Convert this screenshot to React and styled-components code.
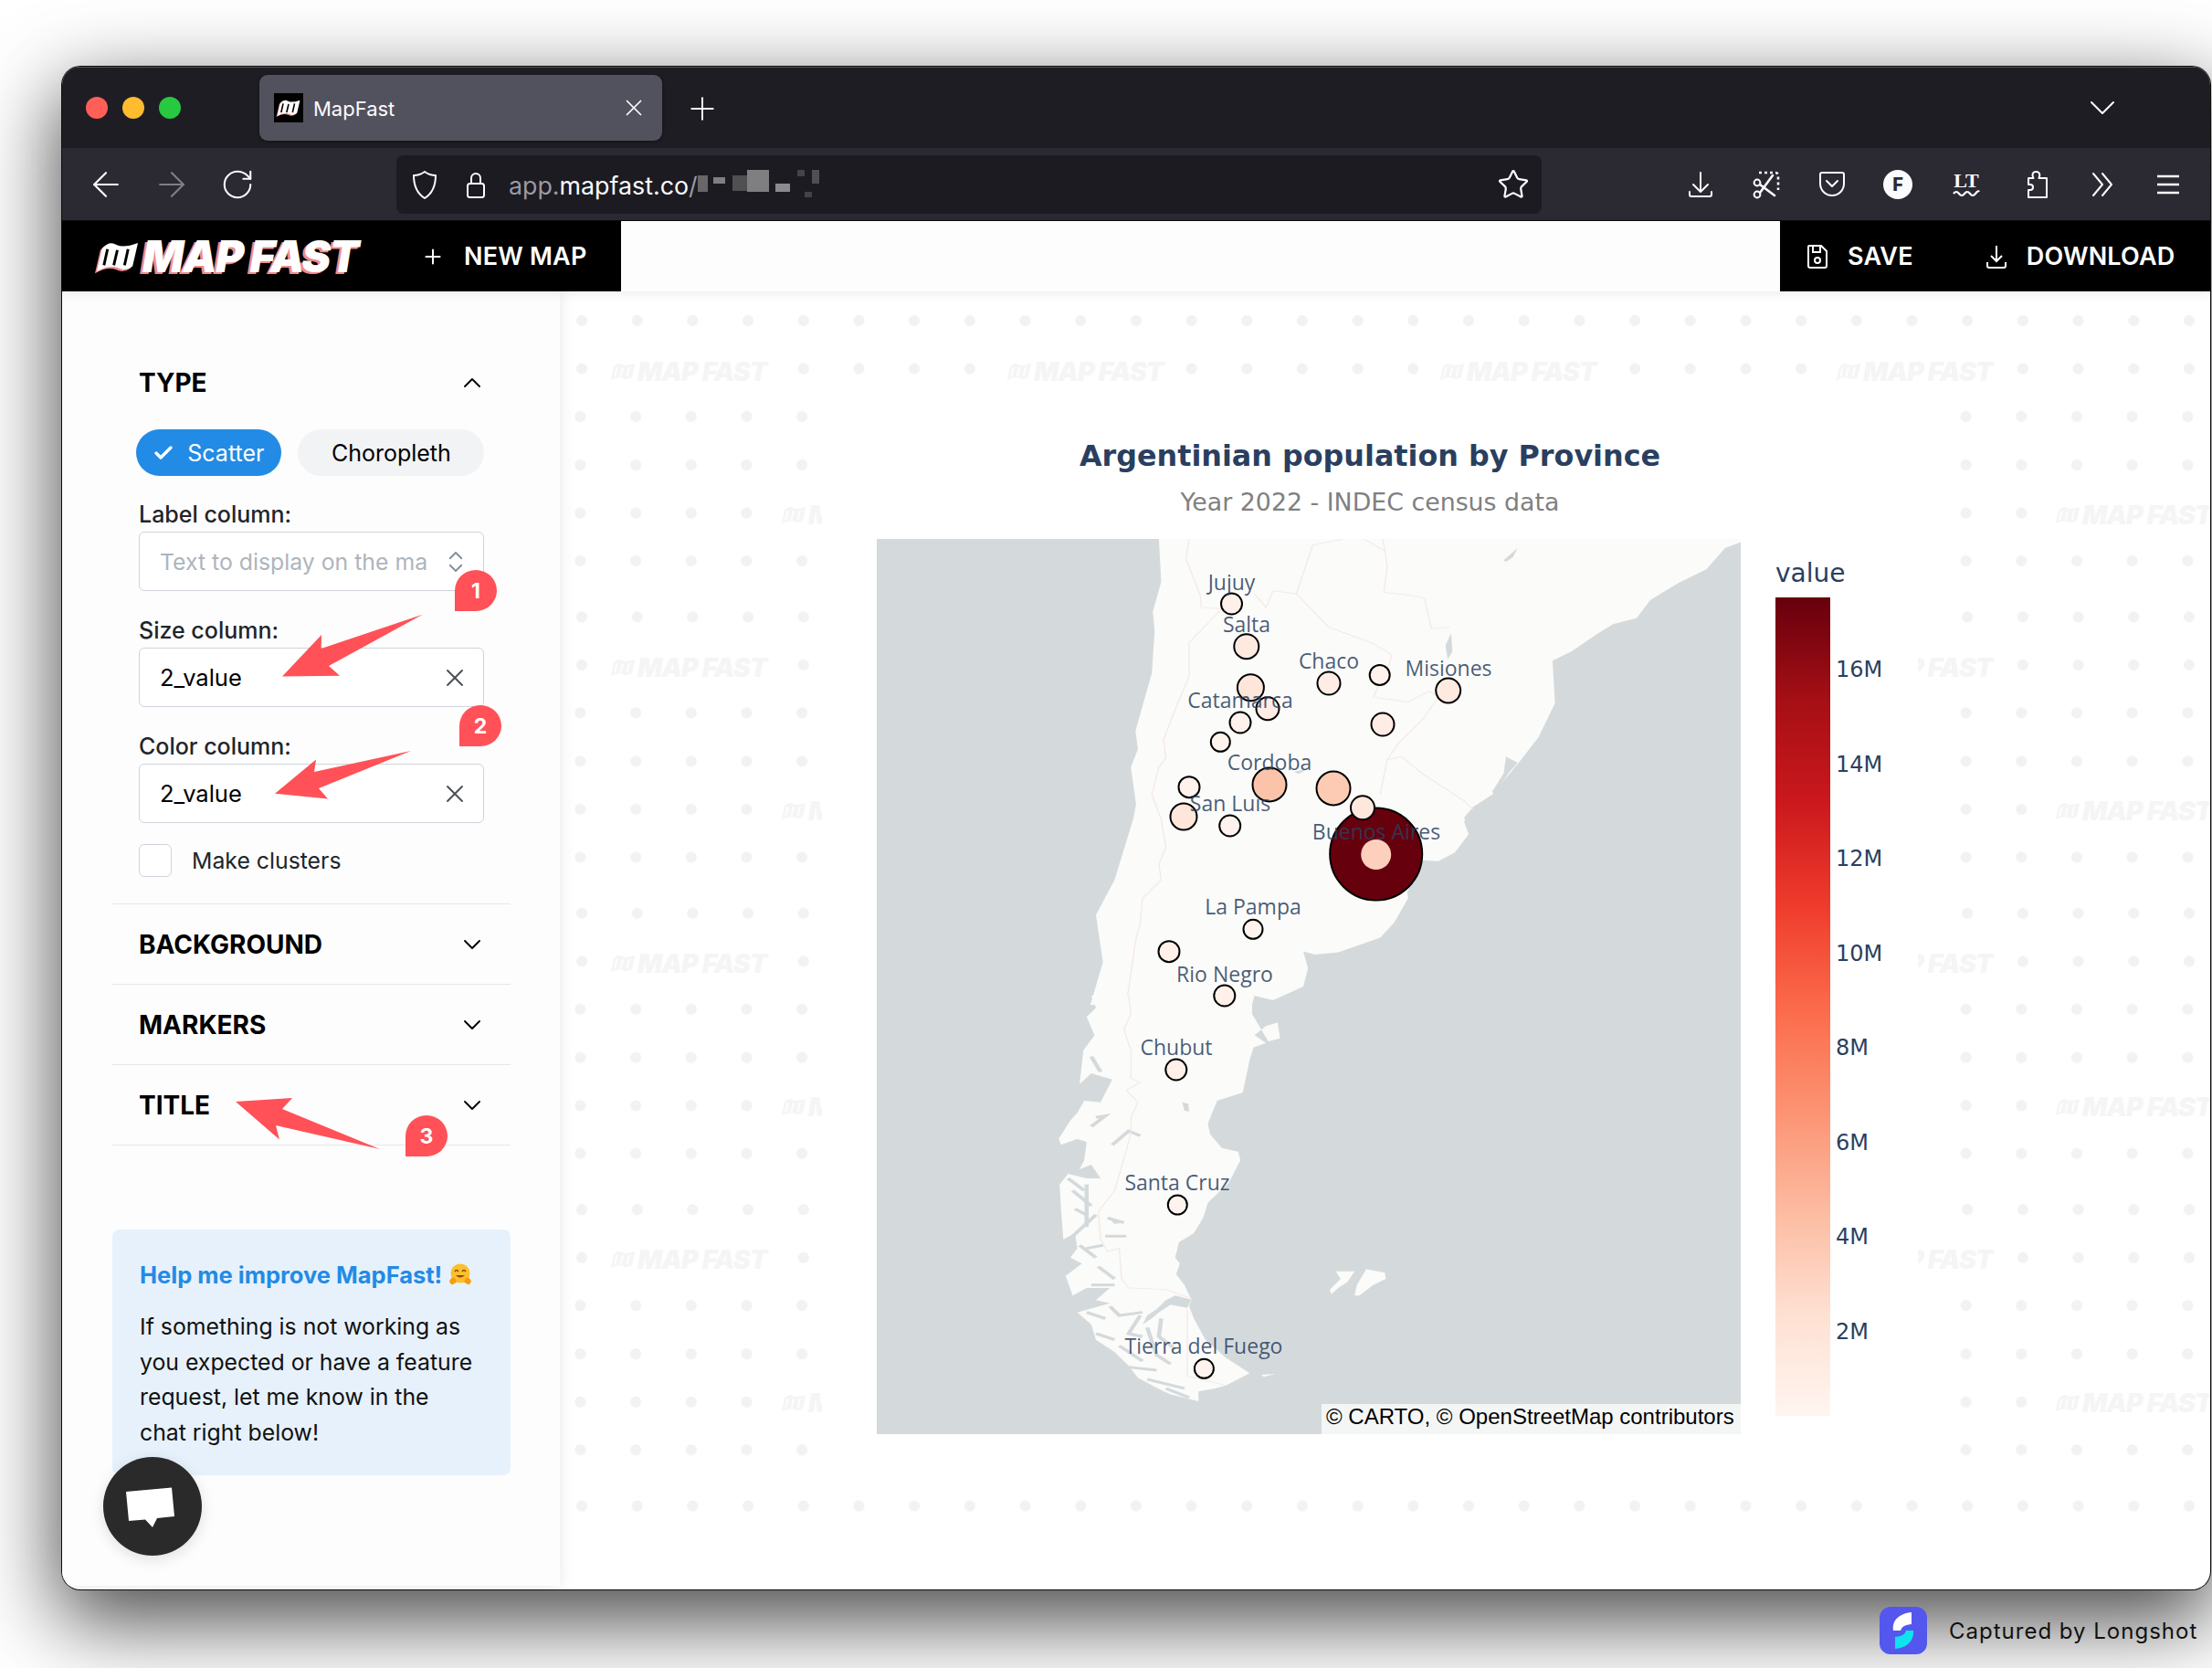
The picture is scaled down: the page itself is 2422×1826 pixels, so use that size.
import React from "react";
import styled, { createGlobalStyle } from "styled-components";
import { ArrowLeft, ArrowRight, Check, ChevronDown, ChevronUp, ChevronsUpDown, Plus, RotateCw, Star, X } from "lucide-react";

const GlobalStyle = createGlobalStyle`
  html, body {
    margin: 0;
    padding: 0;
    background: #fff;
    overflow: hidden;
  }
  * { box-sizing: border-box; }
`;

const PROVINCES = [
  { x: 1348.5, y: 661, r: 11.5, fill: "#fff0e9" },
  { x: 1364.8, y: 707.7, r: 13.5, fill: "#fee9df" },
  { x: 1369.4, y: 752.7, r: 14.5, fill: "#fee6da" },
  { x: 1388, y: 775.7, r: 12.5, fill: "#ffece4" },
  { x: 1358, y: 791, r: 11.5, fill: "#fff1eb" },
  { x: 1336.3, y: 812.3, r: 10.5, fill: "#fff3ee" },
  { x: 1455, y: 748, r: 12.5, fill: "#ffede5" },
  { x: 1510.7, y: 739, r: 11, fill: "#fff1eb" },
  { x: 1585.7, y: 756, r: 13.5, fill: "#feeae0" },
  { x: 1514, y: 793, r: 12.5, fill: "#ffece4" },
  { x: 1390, y: 859, r: 18.5, fill: "#fcc3ab" },
  { x: 1460, y: 863, r: 18.5, fill: "#fdcab4" },
  { x: 1302, y: 861.7, r: 11.5, fill: "#fff1eb" },
  { x: 1296, y: 894, r: 14.5, fill: "#fee6da" },
  { x: 1346.7, y: 904, r: 11.5, fill: "#fff2ec" },
  { x: 1506.7, y: 935, r: 50.5, fill: "#67000d" },
  { x: 1492, y: 884.3, r: 13, fill: "#fee8dd" },
  { x: 1372, y: 1017.3, r: 10.5, fill: "#fff3ee" },
  { x: 1280, y: 1041.7, r: 11.5, fill: "#fff0e9" },
  { x: 1340.8, y: 1090, r: 11.5, fill: "#fff0e9" },
  { x: 1287.8, y: 1171, r: 11.5, fill: "#fff0e9" },
  { x: 1289.3, y: 1319, r: 10.5, fill: "#fff3ee" },
  { x: 1318.4, y: 1498.3, r: 10.5, fill: "#fff3ee" },
];

const PLACE_LABELS = [
  { name: "Jujuy", x: 1348.5, y: 638 },
  { name: "Salta", x: 1365, y: 684 },
  { name: "Chaco", x: 1455, y: 724 },
  { name: "Misiones", x: 1586, y: 732 },
  { name: "Catamarca", x: 1358, y: 767 },
  { name: "Cordoba", x: 1390, y: 835 },
  { name: "San Luis", x: 1347, y: 880 },
  { name: "Buenos Aires", x: 1507, y: 911 },
  { name: "La Pampa", x: 1372, y: 993 },
  { name: "Rio Negro", x: 1341, y: 1067 },
  { name: "Chubut", x: 1288, y: 1147 },
  { name: "Santa Cruz", x: 1289, y: 1295 },
  { name: "Tierra del Fuego", x: 1318, y: 1474 },
];

const TICKS = ["16M", "14M", "12M", "10M", "8M", "6M", "4M", "2M"];

const WATERMARKS = [
  ...[406, 730, 1054, 1378].flatMap((y) => [754, 1188, 1662, 2096].map((x) => ({ x, y }))),
  ...[563, 887, 1211, 1535].flatMap((y) => [941, 1428, 1849, 2336].map((x) => ({ x, y }))),
];

const FJORDS = [
  "M480 430L510 395L490 400",
  "M470 620L470 760",
  "M490 720L440 790",
  "M525 490L560 445L585 460",
  "M515 730L550 745",
  "M510 790L555 790",
  "M505 820L470 830",
  "M440 640L480 690",
  "M445 700L470 720",
  "M430 600L465 640",
  "M455 820L490 860",
  "M480 950L530 950",
  "M495 890L530 930",
  "M520 1020L540 1050L590 1040",
  "M600 1090L620 1180L650 1210",
  "M540 1150L590 1200",
  "M490 1110L530 1130",
  "M560 1220L620 1230",
  "M600 1260L680 1290",
  "M640 1290L690 1320",
  "M585 1050L560 1110L590 1120",
  "M630 1060L625 1120L660 1160",
  "M510 1060L470 1040",
  "M505 300L470 310",
  "M480 200L500 250",
];

function LogoMark({ slit = "#000" }) {
  return (
    <svg viewBox="0 0 48 36">
      <path d="M7 9Q15 0 23 5Q31 9 47 3L41 29Q33 35 25 31Q15 27 1 35Z" fill="currentColor" />
      <path d="M13 10L9 28M24 11L20 28M36 10L32 28" stroke={slit} strokeWidth="3" fill="none" />
    </svg>
  );
}

function HugEmoji() {
  return (
    <svg width="26" height="26" viewBox="0 0 26 26">
      <circle cx="13" cy="12" r="10.5" fill="#fbc02d" />
      <path d="M7 10q2-3 4 0M15 10q2-3 4 0" stroke="#7a4a00" strokeWidth="1.4" fill="none" />
      <path d="M8 14q5 5 10 0z" fill="#a33f12" />
      <path d="M1 21q2-6 6-4l2 4q-3 4-6 3zM25 21q-2-6-6-4l-2 4q3 4 6 3z" fill="#f59e0b" />
    </svg>
  );
}

function ToolIcon({ children }) {
  return (
    <svg width="32" height="32" viewBox="0 0 32 32" fill="none" stroke="currentColor" strokeWidth="2" strokeLinecap="round" strokeLinejoin="round">
      {children}
    </svg>
  );
}

function Accordion({ title, children, open }) {
  return (
    <Section>
      <SectionHead>
        <span>{title}</span>
        {open ? <ChevronUp size={32} strokeWidth={1.4} /> : <ChevronDown size={32} strokeWidth={1.4} />}
      </SectionHead>
      {children}
    </Section>
  );
}

function Field({ label, value, placeholder }) {
  return (
    <FieldWrap>
      <FieldLabel>{label}</FieldLabel>
      <SelectBox>
        <SelectText $muted={!value}>{value || placeholder}</SelectText>
        {value ? <X size={32} strokeWidth={1.4} color="#495057" /> : <ChevronsUpDown size={30} strokeWidth={1.5} color="#868e96" />}
      </SelectBox>
    </FieldWrap>
  );
}

function ArgentinaMap() {
  return (
    <MapSvg width="946" height="980" viewBox="0 0 946 980">
      <rect width="946" height="980" fill="#d4dadc" />
      <g transform="translate(-10 -10) scale(.5102 .3333)">
        <path
          fill="#fbfbf9"
          d="M625 30L630 170L612 270L616 330L610 470L575 660L580 720L565 780L576 900L570 950L550 1050L530 1150L490 1265L505 1420L478 1560L825 1560L830 1530L870 1545L935 1500L945 1440L935 1385L960 1395L1010 1388L1100 1340L1130 1290L1160 1210L1158 1190L1190 1085L1225 1088L1260 1060L1290 1000L1280 960L1300 910L1340 870L1400 760L1440 680L1475 570L1470 430L1510 400L1568 340L1600 310L1650 290L1680 230L1740 175L1800 130L1840 60L1874 40L1874 30Z"
        />
        <path fill="#d4dadc" d="M1365 100L1395 60L1385 90L1370 105ZM1370 745L1395 765L1375 800L1345 870L1340 860L1365 800ZM1318 895L1300 920L1285 955L1290 985L1280 945L1300 910ZM1240 380L1252 340L1255 400L1245 425ZM915 795L945 785L925 802Z" />
        <g fill="none" stroke="#f3e7e7" strokeWidth="2.4">
          <path d="M690 30L683 95L715 220L715 255L760 260L690 370L690 480L660 590L635 690L640 750L625 780L610 870L630 950L640 1040L625 1100L630 1150L590 1210L585 1290L575 1350L555 1560" />
          <path d="M1105 30L1110 65L1115 120L1108 205L1165 215L1195 225L1210 325L1250 320" />
          <path d="M1020 30L955 50L940 120L920 210L870 200L855 255L830 210" />
          <path d="M920 210L990 320L1080 370L1125 410L1120 440L1085 550L1160 565L1205 530L1225 550L1190 625L1140 700L1115 755L1100 870" />
          <path d="M1115 755L1145 745L1190 800L1280 890L1300 920" />
          <path d="M1065 30L1110 70" />
        </g>
      </g>
      <g transform="translate(-10 500) scale(.5102 .3333)">
        <path
          fill="#fbfbf9"
          d="M480 0L490 40L470 70L487 130L463 180L455 290L480 255L525 275L500 350L465 345L450 385L435 410L410 470L415 490L450 470L470 480L465 540L455 570L480 555L500 600L470 600L430 585L412 620L415 700L420 800L445 780L450 830L435 860L460 880L425 920L440 985L470 960L520 960L490 1000L520 1010L450 1040L480 1080L490 1130L530 1170L560 1215L580 1255L610 1280L650 1310L710 1332L710 1300L745 1290L770 1280L820 1240L770 1190L725 1130L700 1060L690 1020L695 1000L680 950L662 915L670 880L660 860L668 810L700 780L720 730L730 680L775 615L800 540L795 512L760 500L735 455L730 420L750 345L805 318L820 210L828 170L855 155L830 130L855 100L880 88L885 140L860 150L825 60L825 0Z"
        />
        <g fill="none" stroke="#d4dadc" strokeWidth="9">
          {FJORDS.map((d) => (
            <path key={d} d={d} />
          ))}
        </g>
        <path fill="#d4dadc" d="M695 998L660 985L640 1000L620 1030L600 1050L590 1080L610 1060L625 1040L650 1015L686 1025ZM675 350L688 355L690 380L680 378ZM515 725L550 745L530 750Z" />
        <g fill="none" stroke="#f3e7e7" strokeWidth="2.4">
          <path d="M560 0L565 60L550 110L565 180L565 270L585 285L555 310L580 350L565 400L565 450L555 510L530 640L495 710L500 800L515 840L540 830L545 930L560 960L640 965L695 995" />
          <path d="M686 1030L686 1250L770 1280" />
        </g>
        <path fill="#fbfbf9" d="M1005 905L1045 905L1030 940L1010 960L995 980L992 965L1015 930ZM1070 898L1110 910L1112 930L1085 950L1055 985L1045 985L1050 950ZM845 1245L875 1242L850 1252Z" />
      </g>
      {PROVINCES.map((p) => (
        <circle key={`${p.x}-${p.y}`} cx={p.x - 960} cy={p.y - 590} r={p.r} fill={p.fill} stroke="#000" strokeWidth="2" />
      ))}
      <circle cx={546.7} cy={345.5} r={16.5} fill="#fdd0bd" />
      {PLACE_LABELS.map((l) => (
        <PlaceText key={l.name} x={l.x - 960} y={l.y - 590 + 8} textAnchor="middle">
          {l.name}
        </PlaceText>
      ))}
    </MapSvg>
  );
}

export default function App() {
  return (
    <Page>
      <GlobalStyle />
      <BrowserWindow>
        <TabBar>
          <Lights>
            <Light $color="#ff5f57" />
            <Light $color="#febc2e" />
            <Light $color="#28c840" />
          </Lights>
          <Tab>
            <Favicon>
              <LogoMark />
            </Favicon>
            <TabTitle>MapFast</TabTitle>
            <X size={30} strokeWidth={1.4} />
          </Tab>
          <NewTab>
            <Plus size={40} strokeWidth={1.2} />
          </NewTab>
          <TabList>
            <ChevronDown size={48} strokeWidth={1} />
          </TabList>
        </TabBar>

        <ToolBar>
          <Slot $w={72}>
            <ArrowLeft size={44} strokeWidth={1.2} />
          </Slot>
          <Slot $w={72} $dim>
            <ArrowRight size={44} strokeWidth={1.2} />
          </Slot>
          <Slot $w={72}>
            <RotateCw size={38} strokeWidth={1.3} />
          </Slot>
          <AddressBar>
            <AddressIcon>
              <ToolIcon>
                <path d="M16 2C12 5 8 6 4 6C4 17 8 26 16 31C24 26 28 17 28 6C24 6 20 5 16 2Z" />
              </ToolIcon>
            </AddressIcon>
            <AddressIcon>
              <ToolIcon>
                <path d="M11 15V9a5 5 0 0 1 10 0v6" />
                <rect x="7" y="15" width="18" height="15" rx="2.5" />
              </ToolIcon>
            </AddressIcon>
            <UrlText>
              <UrlDim>app.</UrlDim>mapfast.co<UrlDim>/</UrlDim>
            </UrlText>
            <Mosaic width="136" height="32" viewBox="0 0 136 32">
              <rect x="0" y="6" width="11" height="18" fill="#888" />
              <rect x="17" y="8" width="13" height="7" fill="#aaa" />
              <rect x="38" y="6" width="16" height="17" fill="#666" />
              <rect x="54" y="0" width="24" height="24" fill="#aaa" />
              <rect x="85" y="15" width="16" height="9" fill="#bbb" />
              <rect x="109" y="0" width="8" height="7" fill="#555" />
              <rect x="125" y="0" width="8" height="15" fill="#666" />
              <rect x="117" y="24" width="8" height="6" fill="#555" />
            </Mosaic>
            <StarWrap>
              <Star size={36} strokeWidth={1.5} />
            </StarWrap>
          </AddressBar>
          <ToolIcons>
            <Slot $w={73}>
              <ToolIcon>
                <path d="M16 3v21M8 16l8 8 8-8M4 24v3a2 2 0 0 0 2 2h20a2 2 0 0 0 2-2v-3" />
              </ToolIcon>
            </Slot>
            <Slot $w={72}>
              <ToolIcon>
                <path d="M8 3h18a3 3 0 0 1 3 3v16" strokeDasharray="3 3" strokeWidth="2.6" strokeLinecap="butt" />
                <circle cx="6" cy="14" r="3.4" />
                <circle cx="6" cy="27" r="3.4" />
                <path d="M9 25L23 6M9 16L25 28" strokeWidth="2.6" />
              </ToolIcon>
            </Slot>
            <Slot $w={71}>
              <ToolIcon>
                <path d="M5 3h22a2 2 0 0 1 2 2v10a13 13 0 0 1-26 0V5a2 2 0 0 1 2-2z" />
                <path d="M10 12l6 6 6-6" />
              </ToolIcon>
            </Slot>
            <Slot $w={74}>
              <Avatar>F</Avatar>
            </Slot>
            <Slot $w={76}>
              <svg width="32" height="32" viewBox="0 0 32 32">
                <LtText x="16" y="19" textAnchor="middle">
                  LT
                </LtText>
                <path d="M2 26q3-4 6 0t6 0 6 0 6 0 4-2" stroke="currentColor" strokeWidth="2.2" fill="none" />
              </svg>
            </Slot>
            <Slot $w={76}>
              <ToolIcon>
                <path d="M16 2a3.5 3.5 0 0 0-3.5 3.5c0 1.4.5 2.4 1 3.5H8v7h2a3 3 0 0 1 0 6H8v8h20V9h-8.500c.5-1 .8-2.100.8-3.500A3.500 3.500 0 0 0 16 2z" />
              </ToolIcon>
            </Slot>
            <Slot $w={71}>
              <ToolIcon>
                <path d="M5 4l10 12L5 28M15 4l10 12-10 12" />
              </ToolIcon>
            </Slot>
            <Slot $w={72}>
              <ToolIcon>
                <path d="M4 7h24M4 16h24M4 25h24" strokeLinecap="butt" strokeWidth="2.4" />
              </ToolIcon>
            </Slot>
          </ToolIcons>
        </ToolBar>

        <AppHeader>
          <HeaderLeft>
            <BrandMark>
              <LogoMark />
            </BrandMark>
            <BrandText>MAP FAST</BrandText>
            <HeaderAction $ml={66}>
              <Plus size={26} strokeWidth={1.8} />
              NEW MAP
            </HeaderAction>
          </HeaderLeft>
          <HeaderRight>
            <HeaderAction>
              <svg width="24" height="28" viewBox="0 0 24 28" fill="none" stroke="currentColor" strokeWidth="2">
                <path d="M3 2h13l6 6v16a2 2 0 0 1-2 2H4a2 2 0 0 1-2-2V3a1 1 0 0 1 1-1z" />
                <path d="M7 2v7h8V2" />
                <circle cx="12" cy="18" r="3" />
              </svg>
              SAVE
            </HeaderAction>
            <HeaderAction $ml={79}>
              <svg width="24" height="28" viewBox="0 0 24 28" fill="none" stroke="currentColor" strokeWidth="2">
                <path d="M12 2v17M6 13l6 6 6-6M2 20v4a2 2 0 0 0 2 2h16a2 2 0 0 0 2-2v-4" />
              </svg>
              DOWNLOAD
            </HeaderAction>
          </HeaderRight>
        </AppHeader>

        <Body>
          <Sidebar>
            <Accordion title="TYPE" open>
              <Panel>
                <ChipRow>
                  <Chip $active>
                    <Check size={24} strokeWidth={3.4} />
                    Scatter
                  </Chip>
                  <Chip $wide>Choropleth</Chip>
                </ChipRow>
                <Field label="Label column:" placeholder="Text to display on the map" />
                <Field label="Size column:" value="2_value" />
                <Field label="Color column:" value="2_value" />
                <CheckRow>
                  <CheckBox />
                  Make clusters
                </CheckRow>
              </Panel>
            </Accordion>
            <Accordion title="BACKGROUND" />
            <Accordion title="MARKERS" />
            <Accordion title="TITLE" />
            <HelpCard>
              <HelpTitle>
                Help me improve MapFast! <HugEmoji />
              </HelpTitle>
              <HelpBody>If something is not working as you expected or have a feature request, let me know in the chat right below!</HelpBody>
            </HelpCard>
          </Sidebar>

          <Main>
            <Pattern>
              {WATERMARKS.map((w) => (
                <Watermark key={`${w.x}-${w.y}`} $x={w.x - 712} $y={w.y - 349}>
                  <LogoMark slit="#fff" />
                  MAP FAST
                </Watermark>
              ))}
            </Pattern>
            <Plot>
              <PlotTitle>Argentinian population by Province</PlotTitle>
              <PlotSubtitle>Year 2022 - INDEC census data</PlotSubtitle>
              <PlotRow>
                <MapFrame>
                  <ArgentinaMap />
                  <Attribution>© CARTO, © OpenStreetMap contributors</Attribution>
                </MapFrame>
                <Legend>
                  <LegendTitle>value</LegendTitle>
                  <LegendBody>
                    <ColorBar />
                    <TickList>
                      {TICKS.map((t) => (
                        <Tick key={t}>{t}</Tick>
                      ))}
                    </TickList>
                  </LegendBody>
                </Legend>
              </PlotRow>
            </Plot>
          </Main>
        </Body>

        <ChatButton>
          <svg width="108" height="108" viewBox="0 0 108 108">
            <path d="M25 38L75 33.600L78 65L59 67L54 77L46 68.500L28 70Z" fill="#fff" />
          </svg>
        </ChatButton>

        <Annotations viewBox="68 73 2352 1667">
          <path d="M462.700 672.800L351.700 710L352 695L309 740.500L372 739.700L360 729Z" />
          <path d="M450 822L344 845L346 831.600L301 868.700L359 874.400L349 863Z" />
          <path d="M258 1206L320 1202L309 1214L416 1258L302 1232L306 1247.600Z" />
        </Annotations>
        <Pin $x={430} $y={551}>1</Pin>
        <Pin $x={435} $y={699}>2</Pin>
        <Pin $x={376} $y={1148}>3</Pin>
      </BrowserWindow>

      <Credit>
        <svg width="52" height="52" viewBox="0 0 52 52">
          <rect width="52" height="52" rx="12" fill="#5457ee" />
          <path d="M35 6V19Q24 20 23 26H15C13 15 22 7 35 6Z" fill="#fff" />
          <path d="M17 46V33Q28 32 29 26H37C38 37 30 45 17 46Z" fill="#0fe3ee" />
        </svg>
        Captured by Longshot
      </Credit>
    </Page>
  );
}

const Page = styled.div`
  position: relative;
  width: 2422px;
  height: 1826px;
  padding: 73px 2px 0 68px;
  font-family: Inter, "Noto Sans", sans-serif;
  overflow: hidden;
`;

const BrowserWindow = styled.div`
  position: relative;
  height: 1667px;
  display: flex;
  flex-direction: column;
  border-radius: 20px;
  overflow: hidden;
  background: #fff;
  box-shadow: 0 0 0 1px #0c0c0c, 0 30px 90px 4px rgba(0, 0, 0, 0.72);
`;

const TabBar = styled.div`
  height: 89px;
  flex: none;
  display: flex;
  align-items: flex-start;
  background: #1e1d23;
  box-shadow: inset 0 1px 0 #55555a;
  color: #fbfbfe;
`;

const Lights = styled.div`
  display: flex;
  gap: 16px;
  margin: 33px 0 0 26px;
`;

const Light = styled.span`
  width: 24px;
  height: 24px;
  border-radius: 50%;
  background: ${(p) => p.$color};
`;

const Tab = styled.div`
  width: 441px;
  height: 72px;
  margin: 9px 0 0 86px;
  padding: 0 16px;
  display: flex;
  align-items: center;
  background: #52525e;
  border-radius: 9px;
  box-shadow: 0 1px 4px rgba(0, 0, 0, 0.4);
`;

const Favicon = styled.div`
  width: 32px;
  height: 32px;
  display: flex;
  align-items: center;
  justify-content: center;
  background: #000;
  color: #fff;
  svg {
    width: 26px;
    filter: drop-shadow(-1px 1px 0 #f08080);
  }
`;

const TabTitle = styled.span`
  flex: 1;
  margin: 2px 0 0 11px;
  font-size: 22px;
`;

const NewTab = styled.div`
  margin: 26px 0 0 24px;
  display: flex;
`;

const TabList = styled.div`
  margin: 21px 94px 0 auto;
  display: flex;
`;

const ToolBar = styled.div`
  height: 80px;
  flex: none;
  display: flex;
  align-items: center;
  padding-left: 12px;
  background: #2b2a33;
  border-bottom: 1px solid #0c0c0d;
  color: #fbfbfe;
`;

const Slot = styled.div`
  width: ${(p) => p.$w}px;
  display: flex;
  justify-content: center;
  flex: none;
  opacity: ${(p) => (p.$dim ? 0.4 : 1)};
`;

const AddressBar = styled.div`
  width: 1254px;
  height: 64px;
  margin-left: 138px;
  padding: 0 13px 0 15px;
  display: flex;
  align-items: center;
  flex: none;
  background: #1c1b22;
  border-radius: 8px;
`;

const AddressIcon = styled.div`
  width: 32px;
  height: 32px;
  margin-right: 24px;
  svg {
    display: block;
  }
`;

const UrlText = styled.span`
  margin: 2px 0 0 -4px;
  font-size: 26.8px;
  color: #fbfbfe;
`;

const UrlDim = styled.span`
  color: #9a9aa2;
`;

const Mosaic = styled.svg`
  opacity: 0.7;
`;

const StarWrap = styled.div`
  margin-left: auto;
  display: flex;
`;

const ToolIcons = styled.div`
  display: flex;
  margin-left: 137px;
`;

const Avatar = styled.div`
  width: 32px;
  height: 32px;
  border-radius: 50%;
  display: flex;
  align-items: center;
  justify-content: center;
  background: #fbfbfe;
  color: #2b2a33;
  font-size: 20px;
  font-weight: 800;
`;

const LtText = styled.text`
  font-family: "Liberation Serif", serif;
  font-size: 22px;
  font-weight: 700;
  fill: currentColor;
`;

const AppHeader = styled.header`
  position: relative;
  z-index: 3;
  height: 77px;
  flex: none;
  display: flex;
  justify-content: space-between;
  background: #fdfdfd;
  box-shadow: 0 2px 12px rgba(0, 0, 0, 0.08);
`;

const HeaderLeft = styled.div`
  width: 612px;
  padding-left: 37px;
  display: flex;
  align-items: center;
  background: #000;
  color: #fff;
`;

const HeaderRight = styled.div`
  width: 471px;
  padding-left: 29px;
  display: flex;
  align-items: center;
  background: #000;
  color: #fff;
`;

const BrandMark = styled.div`
  width: 47px;
  display: flex;
  svg {
    width: 47px;
    filter: drop-shadow(-2px 2px 0 #f08a8a);
  }
`;

const BrandText = styled.span`
  width: 239px;
  flex: none;
  margin-left: 4px;
  font-size: 47.5px;
  font-weight: 900;
  font-style: italic;
  letter-spacing: -1.5px;
  white-space: nowrap;
  text-shadow: -3px 2px 0 #f08a8a;
`;

const HeaderAction = styled.div`
  margin-left: ${(p) => p.$ml || 0}px;
  display: flex;
  align-items: center;
  gap: 21px;
  font-size: 27px;
  font-weight: 600;
  letter-spacing: 0.2px;
  white-space: nowrap;
`;

const Body = styled.div`
  flex: 1;
  min-height: 0;
  display: flex;
`;

const Sidebar = styled.aside`
  position: relative;
  z-index: 2;
  width: 545px;
  flex: none;
  margin-bottom: 4px;
  padding: 56px 54px 0 55px;
  background: #fdfdfd;
  box-shadow: 0 0 16px rgba(0, 0, 0, 0.1);
`;

const Section = styled.section`
  border-bottom: 1px solid #e5e7e9;
`;

const SectionHead = styled.div`
  height: 87px;
  padding: 0 26px 0 29px;
  display: flex;
  align-items: center;
  justify-content: space-between;
  font-size: 28px;
  font-weight: 700;
  color: #000;
`;

const Panel = styled.div`
  padding: 8px 29px 29px;
`;

const ChipRow = styled.div`
  margin-left: -3px;
  display: flex;
  gap: 18px;
`;

const Chip = styled.div`
  width: ${(p) => (p.$wide ? 206 : 160)}px;
  height: 51px;
  padding-left: ${(p) => (p.$wide ? 1 : 0)}px;
  display: flex;
  align-items: center;
  justify-content: center;
  gap: 14px;
  border-radius: 26px;
  font-size: 25px;
  background: ${(p) => (p.$active ? "#228be6" : "#f1f3f5")};
  color: ${(p) => (p.$active ? "#fff" : "#000")};
`;

const FieldWrap = styled.div`
  margin-top: 25px;
  &:nth-child(n + 3) {
    margin-top: 26px;
  }
`;

const FieldLabel = styled.div`
  height: 36px;
  line-height: 34px;
  font-size: 25px;
  font-weight: 500;
  color: #212529;
`;

const SelectBox = styled.div`
  width: 378px;
  height: 65px;
  padding: 0 15px 0 22px;
  display: flex;
  align-items: center;
  justify-content: space-between;
  background: #fff;
  border: 1.5px solid #ced4da;
  border-radius: 6px;
`;

const SelectText = styled.div`
  width: 293px;
  overflow: hidden;
  white-space: nowrap;
  font-size: ${(p) => (p.$muted ? 24.8 : 25.5)}px;
  color: ${(p) => (p.$muted ? "#adb5bd" : "#000")};
`;

const CheckRow = styled.div`
  margin-top: 23px;
  display: flex;
  align-items: center;
  gap: 22px;
  font-size: 24.8px;
  color: #212529;
`;

const CheckBox = styled.span`
  width: 36px;
  height: 36px;
  background: #fff;
  border: 1.5px solid #ced4da;
  border-radius: 6px;
`;

const HelpCard = styled.div`
  margin-top: 92px;
  padding: 31px 30px 28px;
  background: #e7f1fb;
  border-radius: 8px;
`;

const HelpTitle = styled.div`
  height: 36px;
  display: flex;
  align-items: center;
  gap: 7px;
  font-size: 25.500px;
  font-weight: 700;
  color: #228be6;
  white-space: nowrap;
`;

const HelpBody = styled.p`
  margin: 20px 0 0;
  padding-right: 6px;
  font-size: 24.8px;
  line-height: 38.5px;
  color: #111;
`;

const Main = styled.main`
  position: relative;
  flex: 1;
  min-width: 0;
  padding: 111px 0 0 287px;
`;

const Pattern = styled.div`
  position: absolute;
  top: 0;
  left: 0;
  right: 0;
  height: 1361px;
  overflow: hidden;
  background-size: 60.7px 324.4px;
  background-image:
    radial-gradient(circle at 24px 32px, #f2f2f2 5.5px, transparent 6.5px),
    radial-gradient(circle at 24px 84.600px, #f2f2f2 5.5px, transparent 6.5px),
    radial-gradient(circle at 22.400px 137px, #f2f2f2 5.5px, transparent 6.5px),
    radial-gradient(circle at 22.400px 190px, #f2f2f2 5.5px, transparent 6.5px),
    radial-gradient(circle at 22.400px 242.600px, #f2f2f2 5.5px, transparent 6.5px),
    radial-gradient(circle at 22.400px 295px, #f2f2f2 5.5px, transparent 6.5px);
`;

const Watermark = styled.div`
  position: absolute;
  left: ${(p) => p.$x}px;
  top: ${(p) => p.$y}px;
  width: 198px;
  height: 60px;
  padding-left: 13px;
  display: flex;
  align-items: center;
  gap: 2px;
  background: #fff;
  font-size: 28.5px;
  font-weight: 900;
  font-style: italic;
  letter-spacing: -0.9px;
  color: #f5f5f5;
  white-space: nowrap;
  svg {
    width: 28px;
    flex: none;
  }
`;

const Plot = styled.div`
  position: relative;
  z-index: 1;
  width: 1200px;
  height: 1200px;
  padding-top: 49px;
  background: #fff;
`;

const PlotTitle = styled.h1`
  margin: 0;
  height: 40px;
  line-height: 40px;
  text-align: center;
  font-family: "DejaVu Sans", sans-serif;
  font-size: 31.8px;
  font-weight: 700;
  color: #2a3f5f;
`;

const PlotSubtitle = styled.div`
  margin-top: 12px;
  height: 37px;
  line-height: 38px;
  text-align: center;
  font-family: "DejaVu Sans", sans-serif;
  font-size: 26.800px;
  color: #808080;
`;

const PlotRow = styled.div`
  margin-top: 22px;
  padding-left: 60px;
  display: flex;
  gap: 38px;
`;

const MapFrame = styled.div`
  position: relative;
  width: 946px;
  height: 980px;
`;

const MapSvg = styled.svg`
  display: block;
`;

const PlaceText = styled.text`
  font-family: "Open Sans", sans-serif;
  font-size: 23px;
  fill: #2a3f5f;
  fill-opacity: 0.85;
`;

const Attribution = styled.div`
  position: absolute;
  right: 0;
  bottom: 0;
  width: 459px;
  height: 33px;
  padding-left: 5px;
  line-height: 28px;
  background: rgba(255, 255, 255, 0.75);
  font-family: "Liberation Sans", Arial, sans-serif;
  font-size: 24px;
  color: #000;
  white-space: nowrap;
`;

const Legend = styled.div`
  padding-top: 20px;
`;

const LegendTitle = styled.div`
  height: 36px;
  line-height: 36px;
  margin-bottom: 8px;
  font-family: "DejaVu Sans", sans-serif;
  font-size: 28px;
  color: #2a3f5f;
`;

const LegendBody = styled.div`
  display: flex;
`;

const ColorBar = styled.div`
  width: 60px;
  height: 896px;
  background: linear-gradient(#67000d, #a50f15 12.5%, #cb181d 25%, #ef3b2c 37.5%, #fb6a4a 50%, #fc9272 62.5%, #fcbba1 75%, #fee0d2 87.5%, #fff5f0);
`;

const TickList = styled.div`
  margin: 67px 0 0 6px;
  display: flex;
  flex-direction: column;
  gap: 79.500px;
`;

const Tick = styled.div`
  height: 24px;
  line-height: 24px;
  font-family: "DejaVu Sans", sans-serif;
  font-size: 24px;
  color: #2a3f5f;
`;

const ChatButton = styled.div`
  position: absolute;
  left: 45px;
  top: 1522px;
  z-index: 4;
  width: 108px;
  height: 108px;
  border-radius: 50%;
  background: #2a2a2a;
  box-shadow: 0 4px 16px rgba(0, 0, 0, 0.12);
`;

const Annotations = styled.svg`
  position: absolute;
  inset: 0;
  z-index: 5;
  width: 100%;
  height: 100%;
  fill: #ff5157;
  pointer-events: none;
`;

const Pin = styled.div`
  position: absolute;
  z-index: 5;
  left: ${(p) => p.$x}px;
  top: ${(p) => p.$y}px;
  width: 46px;
  height: 45px;
  display: flex;
  align-items: center;
  justify-content: center;
  background: #ff5157;
  border-radius: 50% 50% 50% 0;
  color: #fff;
  font-size: 23px;
  font-weight: 700;
`;

const Credit = styled.div`
  position: absolute;
  left: 2058px;
  top: 1758px;
  display: flex;
  align-items: center;
  gap: 24px;
  padding-top: 1px;
  font-size: 24px;
  letter-spacing: 1px;
  color: #111;
  white-space: nowrap;
`;
